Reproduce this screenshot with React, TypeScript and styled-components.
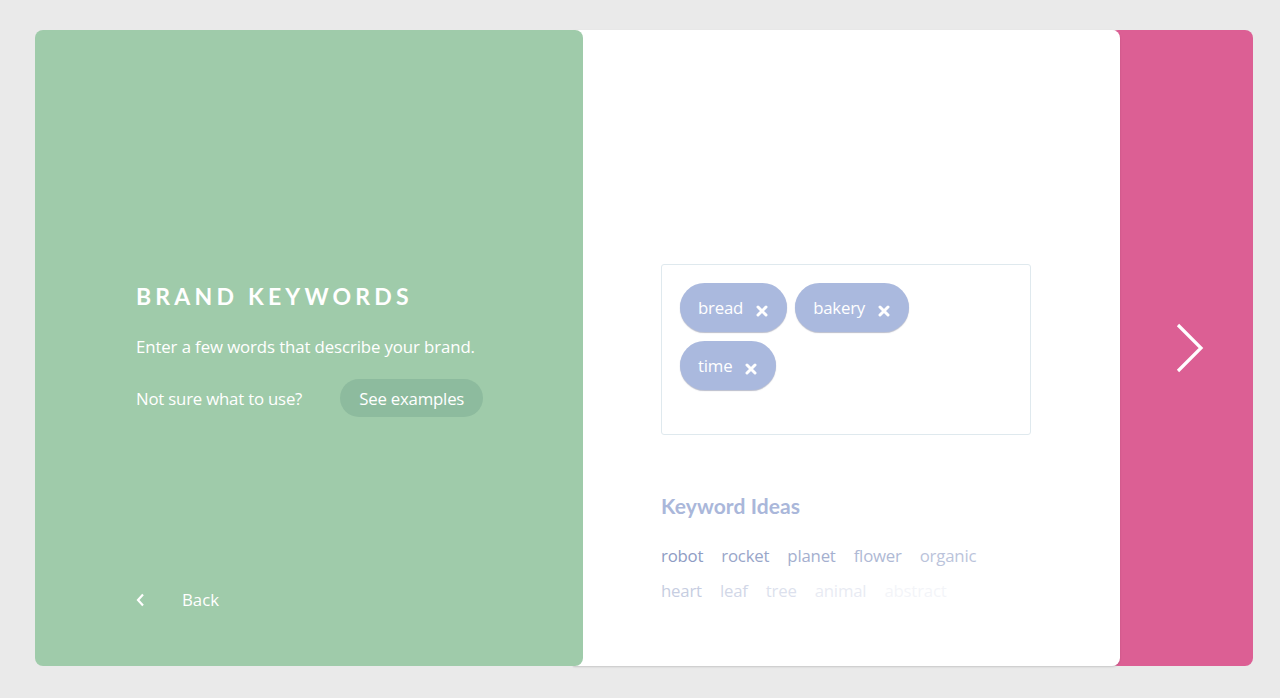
import React from 'react';
import styled, { createGlobalStyle } from 'styled-components';

const GlobalStyle = createGlobalStyle`
  html, body {
    margin: 0;
    padding: 0;
    background: #eaeaea;
    font-family: 'Open Sans', 'Noto Sans', sans-serif;
  }
`;

const Page = styled.div`
  height: 698px;
  padding: 30px 27px 32px 35px;
  box-sizing: border-box;
`;

const Deck = styled.div`
  display: flex;
  height: 636px;
`;

const GreenPanel = styled.section`
  position: relative;
  z-index: 3;
  width: 548px;
  flex-shrink: 0;
  background: #9fcbaa;
  border-radius: 8px;
  box-sizing: border-box;
  padding: 0 0 55px 101px;
  display: flex;
  flex-direction: column;
  color: #fff;
`;

const Intro = styled.div`
  flex: 1;
  display: flex;
  flex-direction: column;
  justify-content: flex-start;
  padding-top: 252px;
`;

const Heading = styled.h1`
  margin: 0 0 25px;
  font-family: 'Lato', sans-serif;
  font-weight: 700;
  font-size: 23px;
  letter-spacing: 4.2px;
`;

const Lead = styled.p`
  margin: 0 0 21px;
  font-size: 16.8px;
  letter-spacing: -0.1px;
`;

const HelpRow = styled.div`
  display: flex;
  align-items: center;
  gap: 38px;
  font-size: 16.8px;
  letter-spacing: -0.2px;
`;

const ExampleButton = styled.button`
  border: none;
  background: #8dbb9e;
  color: #fff;
  font-family: inherit;
  font-size: 16.8px;
  letter-spacing: -0.2px;
  height: 38px;
  padding: 0 19px;
  border-radius: 19px;
  cursor: pointer;
`;

const BackLink = styled.a`
  display: flex;
  align-items: center;
  gap: 37px;
  font-size: 16.8px;
  color: #fff;
  cursor: pointer;
`;

const WhitePanel = styled.section`
  position: relative;
  z-index: 2;
  width: 547px;
  flex-shrink: 0;
  margin-left: -10px;
  background: #fff;
  border-radius: 0 8px 8px 0;
  box-shadow: 0 1px 2px rgba(0, 0, 0, 0.15);
  box-sizing: border-box;
  padding: 234px 0 0 88px;
`;

const TagBox = styled.div`
  width: 370px;
  height: 171px;
  box-sizing: border-box;
  border: 1px solid #dfe9ee;
  border-radius: 3px;
  padding: 18px 30px 18px 18px;
  display: flex;
  flex-wrap: wrap;
  align-content: flex-start;
  gap: 9px 8px;
`;

const Tag = styled.span`
  display: inline-flex;
  align-items: center;
  gap: 13px;
  height: 49px;
  padding: 0 19px 0 18px;
  border-radius: 25px;
  background: #aab9de;
  box-shadow: 0 1px 1px rgba(60, 70, 110, 0.35);
  color: #fff;
  font-size: 16.8px;
  letter-spacing: -0.2px;
  box-sizing: border-box;
  svg {
    margin-top: 6px;
  }
`;

const IdeasTitle = styled.h2`
  margin: 58px 0 26px;
  font-family: 'Lato', sans-serif;
  font-weight: 700;
  font-size: 21px;
  letter-spacing: 0.1px;
  color: #aab7da;
`;

const IdeaRow = styled.div`
  display: flex;
  gap: 18px;
  margin-bottom: 12px;
`;

const Idea = styled.span<{ $fade: number }>`
  font-size: 16.8px;
  letter-spacing: -0.2px;
  color: #8e9cc4;
  opacity: ${(p) => p.$fade};
  cursor: pointer;
`;

const PinkPanel = styled.section`
  position: relative;
  z-index: 1;
  flex: 1;
  margin-left: -10px;
  background: #dc5f94;
  border-radius: 8px;
  display: flex;
  align-items: center;
  justify-content: center;
  padding-left: 16px;
`;

const CloseIcon = () => (
  <svg width="12" height="12" viewBox="0 0 12 12">
    <path d="M2 2 L10 10 M10 2 L2 10" stroke="#fff" strokeWidth="3" strokeLinecap="round" />
  </svg>
);

const tags = ['bread', 'bakery', 'time'];
const ideaRows = [
  ['robot', 'rocket', 'planet', 'flower', 'organic'],
  ['heart', 'leaf', 'tree', 'animal', 'abstract'],
];

const App: React.FC = () => {
  return (
    <>
      <GlobalStyle />
      <Page>
        <Deck>
          <GreenPanel>
            <Intro>
              <Heading>BRAND KEYWORDS</Heading>
              <Lead>Enter a few words that describe your brand.</Lead>
              <HelpRow>
                <span>Not sure what to use?</span>
                <ExampleButton>See examples</ExampleButton>
              </HelpRow>
            </Intro>
            <BackLink>
              <svg width="9" height="14" viewBox="0 0 9 14">
                <path d="M7 1.5 L2 7 L7 12.5" stroke="#fff" strokeWidth="2.2" fill="none" />
              </svg>
              <span>Back</span>
            </BackLink>
          </GreenPanel>
          <WhitePanel>
            <TagBox>
              {tags.map((t) => (
                <Tag key={t}>
                  {t}
                  <CloseIcon />
                </Tag>
              ))}
            </TagBox>
            <IdeasTitle>Keyword Ideas</IdeasTitle>
            {ideaRows.map((row, r) => (
              <IdeaRow key={r}>
                {row.map((w, i) => (
                  <Idea key={w} $fade={Math.max(0.08, 1 - (r * 5 + i) * 0.1)}>
                    {w}
                  </Idea>
                ))}
              </IdeaRow>
            ))}
          </WhitePanel>
          <PinkPanel>
            <svg width="32" height="52" viewBox="0 0 32 52">
              <path d="M4 3 L27 26 L4 49" stroke="#fff" strokeWidth="3.2" fill="none" />
            </svg>
          </PinkPanel>
        </Deck>
      </Page>
    </>
  );
};

export default App;
